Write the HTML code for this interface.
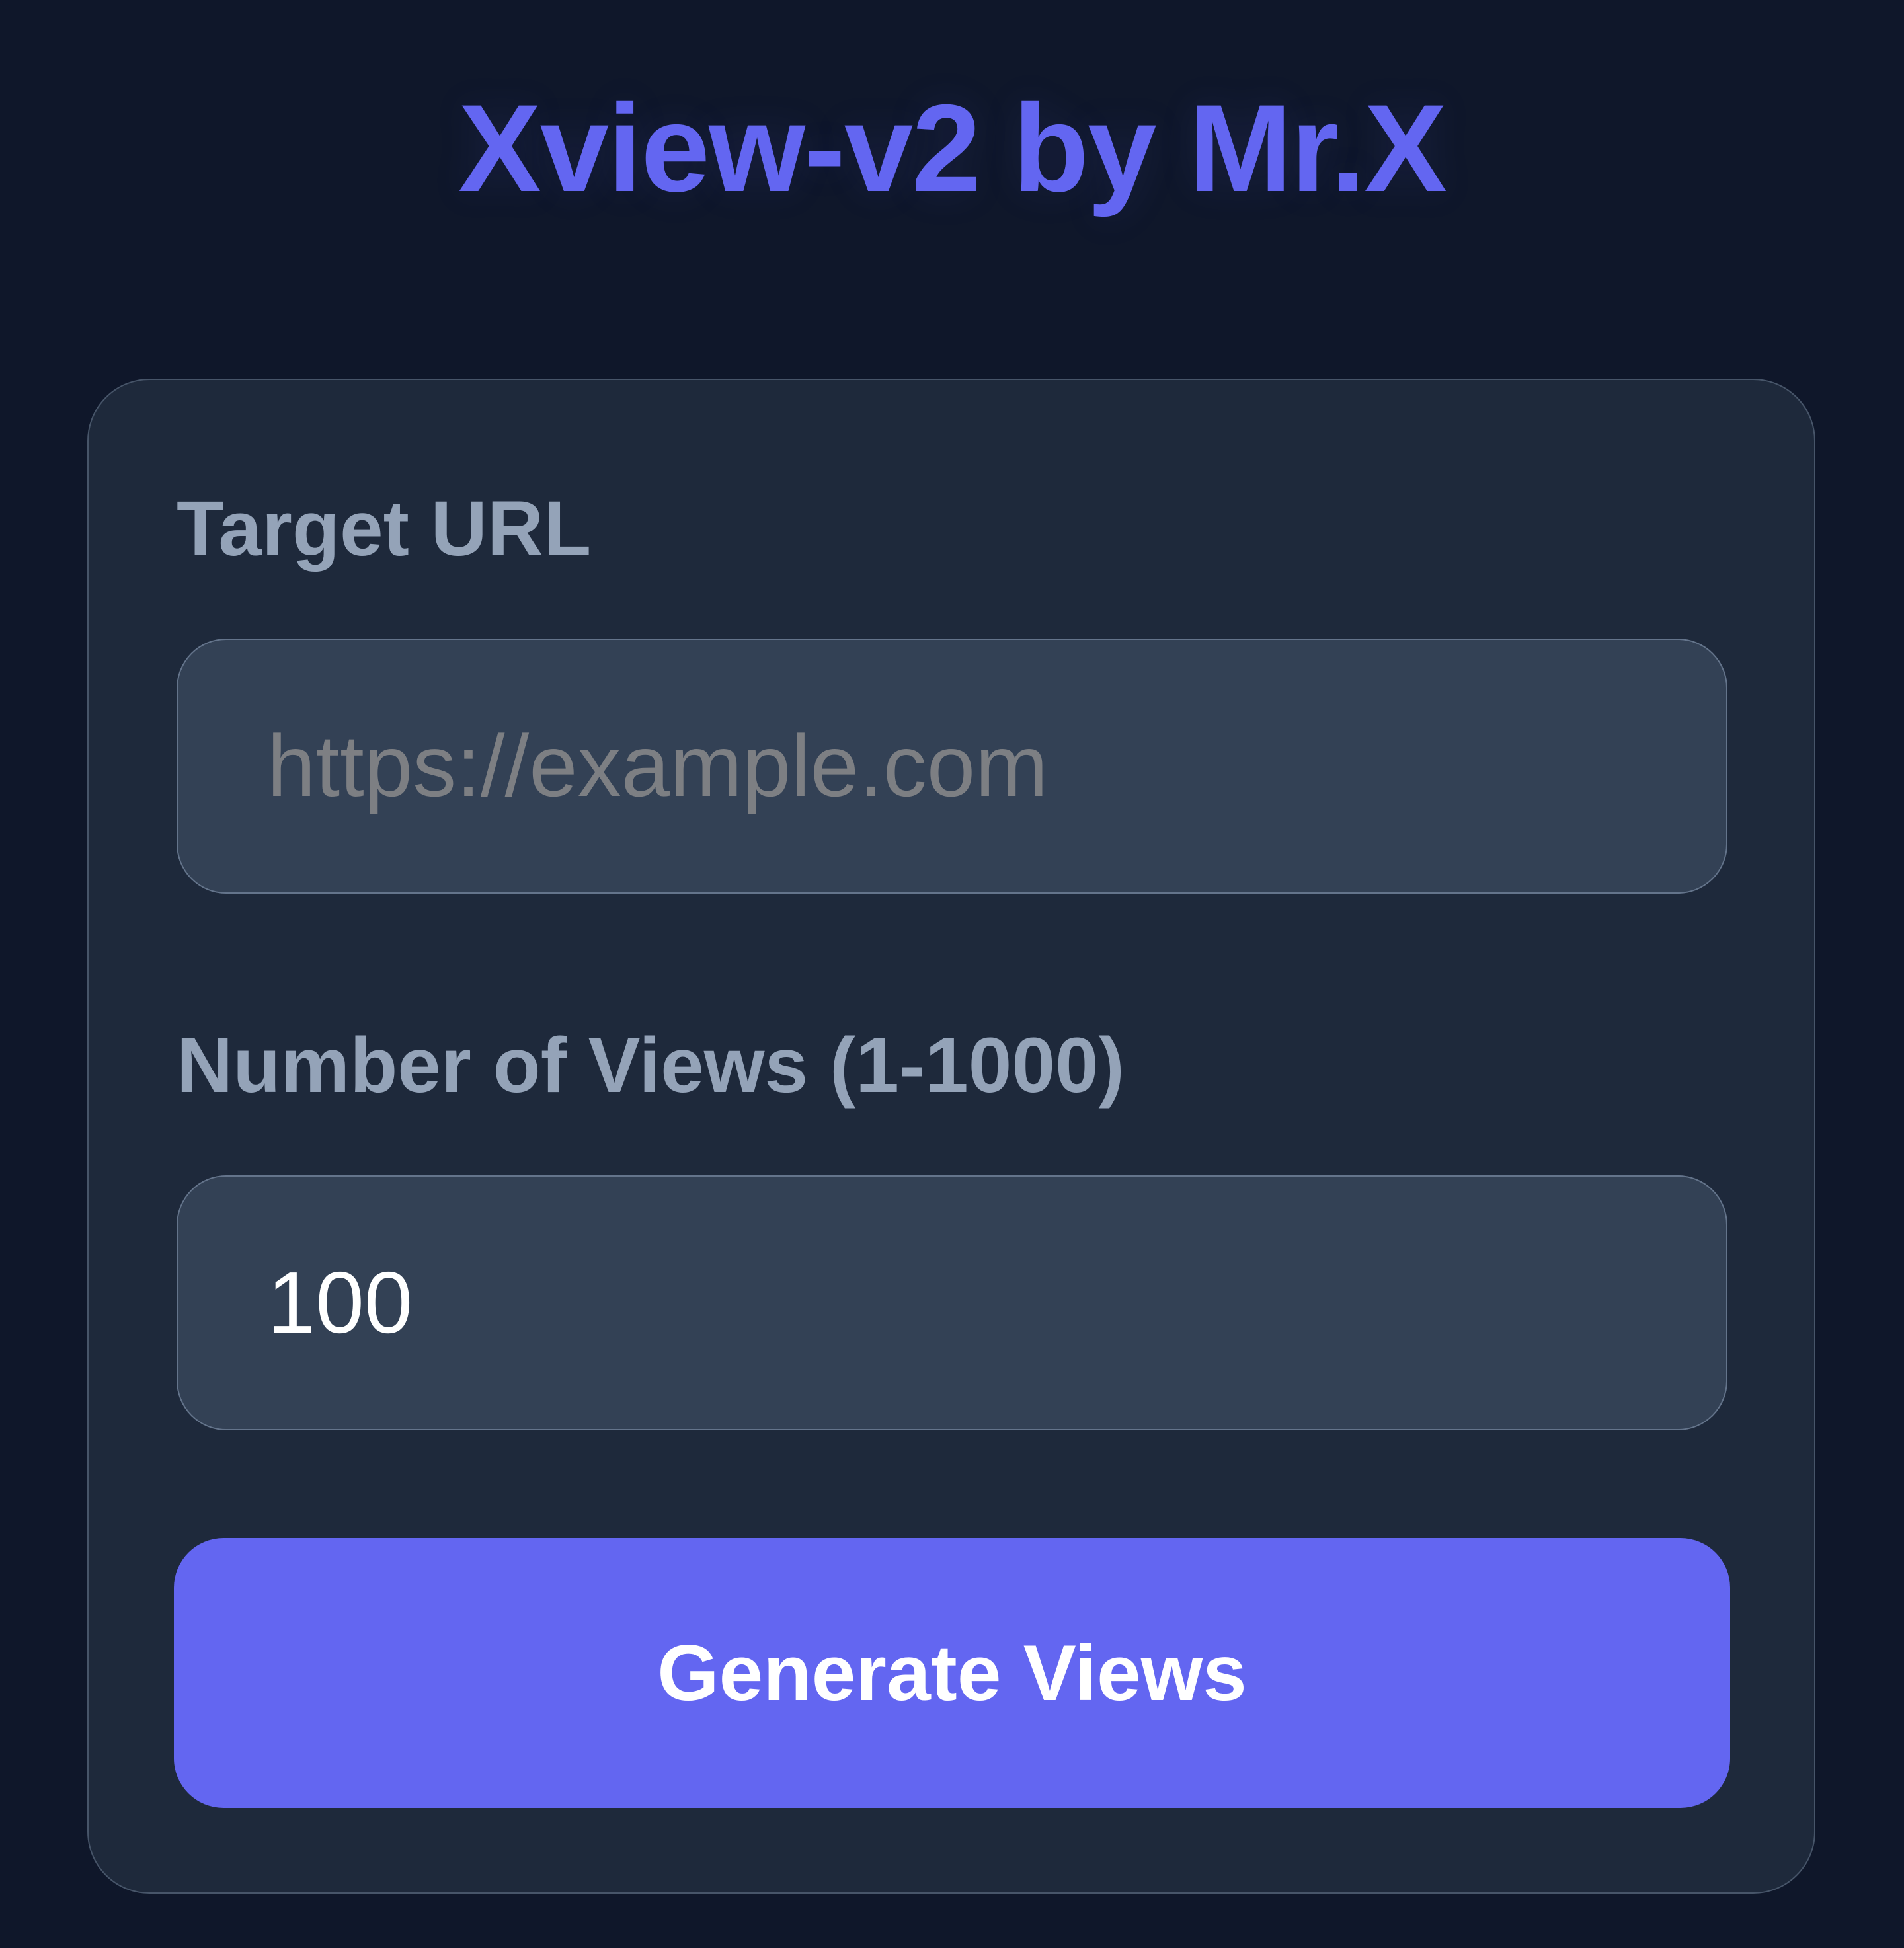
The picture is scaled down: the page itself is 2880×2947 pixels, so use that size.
<!DOCTYPE html>
<html><head><meta charset="utf-8"><style>
html,body{margin:0;padding:0}
body{width:2880px;height:2947px;background:#0f172a;position:relative;overflow:hidden;font-family:"Liberation Sans",sans-serif}
.t{position:absolute;left:0;width:2880px;text-align:center;top:114px;font-size:188px;line-height:220px;font-weight:bold;color:#6366f1;text-shadow:0 0 60px rgba(99,102,241,0.12);letter-spacing:-2px}
.card{position:absolute;left:132px;top:573px;width:2614px;height:2292px;background:#1e293b;border:2px solid #475569;border-radius:94px;box-sizing:border-box}
.l{position:absolute;left:267px;font-size:118px;line-height:140px;font-weight:bold;color:#94a3b8}
.in{position:absolute;left:267px;width:2346px;height:386px;background:#334155;border:2px solid #64748b;border-radius:75px;box-sizing:border-box;font-size:132px;line-height:382px;padding-left:135px}
.btn{position:absolute;left:263px;top:2327px;width:2354px;height:408px;background:#6366f1;border-radius:75px;color:#fff;font-weight:bold;font-size:120px;line-height:408px;text-align:center}
</style></head><body>
<div class="t">Xview-v2 by Mr.X</div>
<div class="card"></div>
<div class="l" style="top:730px">Target URL</div>
<div class="in" style="top:966px;color:#7d7f83">https://example.com</div>
<div class="l" style="top:1542px">Number of Views (1-1000)</div>
<div class="in" style="top:1778px;color:#fff">100</div>
<div class="btn">Generate Views</div>
</body></html>
